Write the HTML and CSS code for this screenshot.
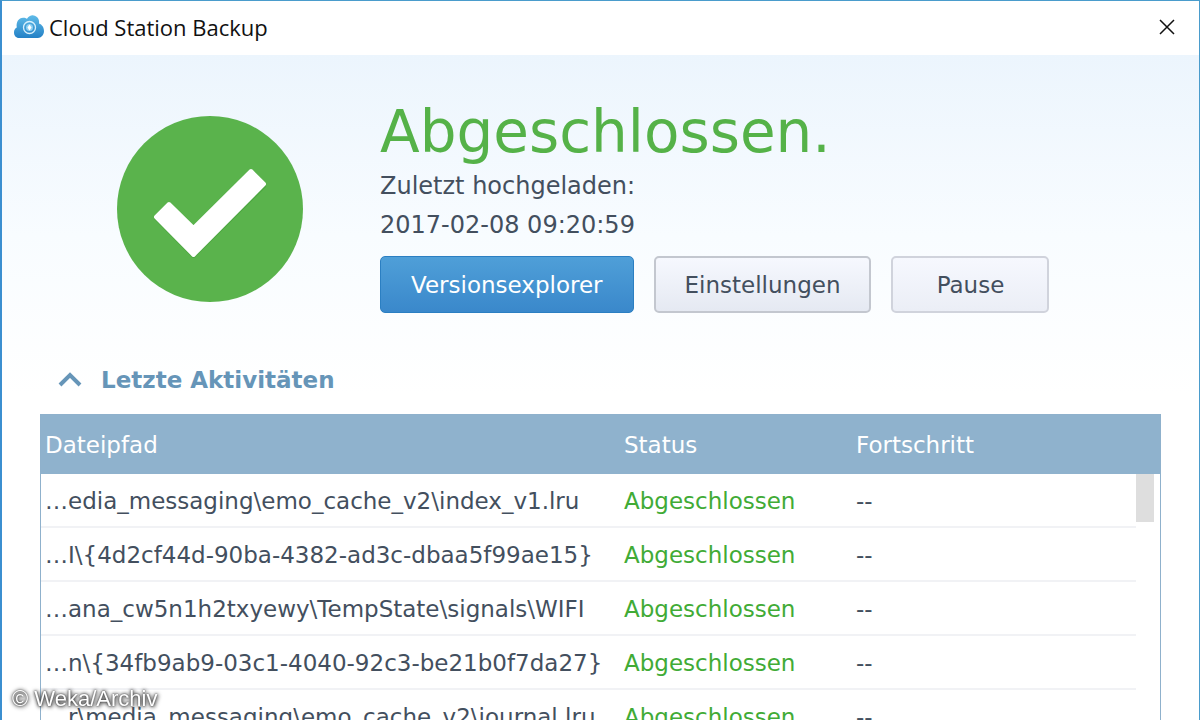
FILE: index.html
```html
<!DOCTYPE html>
<html lang="de">
<head>
    <meta charset="UTF-8">
    <meta name="viewport" content="width=device-width, initial-scale=1.0">
    <title>Cloud Station Backup</title>
    <link rel="stylesheet" href="styles.css">
</head>
<body>
    <div class="window">
        <header class="titlebar">
            <svg class="app-icon" viewBox="0 0 30 24" aria-hidden="true">
                <defs>
                    <linearGradient id="cloud" x1="0" y1="0" x2="0" y2="1">
                        <stop offset="0" stop-color="#5fbbe8"/>
                        <stop offset="1" stop-color="#2481c6"/>
                    </linearGradient>
                </defs>
                <path fill="url(#cloud)" d="M5 23C2 23 0 20.500 0 17.500C0 15 1 13.500 2.800 12.500C1.800 7 5 2.500 9.500 2.800C11 2.800 12 3.300 13 3.800C14.500 1.400 17 0 19.500 .4C23.500 1 25.800 4.600 25 8.500C28 9.500 30 12.500 30 16C30 20 27 23 24 23Z"/>
                <circle cx="15.500" cy="12.500" r="6" fill="none" stroke="#d9f0fc" stroke-width="1.300"/>
                <circle cx="15.500" cy="12.500" r="3.500" fill="#8fd0f2"/>
                <path fill="#ffffff" d="M15.500 9.500l2 3l-2 3l-2-3z"/>
            </svg>
            <h1 class="app-name">Cloud Station Backup</h1>
            <button type="button" class="close" aria-label="Schließen">
                <svg viewBox="0 0 16 16" aria-hidden="true">
                    <path d="M1 1L15 15M15 1L1 15" stroke="#111111" stroke-width="1.500" fill="none"/>
                </svg>
            </button>
        </header>

        <main class="content">
            <section class="summary">
                <svg class="check" viewBox="0 0 186 186" aria-hidden="true">
                    <circle cx="93" cy="93" r="93" fill="#5ab34c"/>
                    <path d="M39 102L52 90L76.500 113L134 57L147 70L76.500 140Z" fill="#3f9a35" stroke="#3f9a35" stroke-width="4" stroke-linejoin="round" opacity=".5"/>
                    <path d="M39 101L52 88L76.500 112L134 55L147 68L76.500 139Z" fill="#ffffff" stroke="#ffffff" stroke-width="4" stroke-linejoin="round"/>
                </svg>
                <div class="details">
                    <h2 class="state">Abgeschlossen.</h2>
                    <p class="uploaded">Zuletzt hochgeladen:<br>2017-02-08 09:20:59</p>
                    <div class="actions">
                        <button type="button" class="btn btn-primary">Versionsexplorer</button>
                        <button type="button" class="btn">Einstellungen</button>
                        <button type="button" class="btn btn-light">Pause</button>
                    </div>
                </div>
            </section>

            <button type="button" class="toggle" aria-expanded="true">
                <svg viewBox="0 0 24 16" aria-hidden="true">
                    <path d="M2 13L12 3L22 13" fill="none" stroke="#6695b8" stroke-width="4"/>
                </svg>
                Letzte Aktivitäten
            </button>

            <div class="activity">
                <table>
                    <colgroup>
                        <col class="col-path">
                        <col class="col-status">
                        <col>
                        <col class="col-scroll">
                    </colgroup>
                    <thead>
                        <tr><th>Dateipfad</th><th>Status</th><th>Fortschritt</th><th></th></tr>
                    </thead>
                    <tbody>
                        <tr><td>…edia_messaging\emo_cache_v2\index_v1.lru</td><td class="done">Abgeschlossen</td><td>--</td></tr>
                        <tr><td>…I\{4d2cf44d-90ba-4382-ad3c-dbaa5f99ae15}</td><td class="done">Abgeschlossen</td><td>--</td></tr>
                        <tr><td>…ana_cw5n1h2txyewy\TempState\signals\WIFI</td><td class="done">Abgeschlossen</td><td>--</td></tr>
                        <tr><td>…n\{34fb9ab9-03c1-4040-92c3-be21b0f7da27}</td><td class="done">Abgeschlossen</td><td>--</td></tr>
                        <tr><td>…r\media_messaging\emo_cache_v2\journal.lru</td><td class="done">Abgeschlossen</td><td>--</td></tr>
                    </tbody>
                </table>
                <div class="thumb"></div>
            </div>
        </main>
    </div>
    <div class="credit">© Weka/Archiv</div>
</body>
</html>
```
FILE: styles.css
```css
* {
    box-sizing: border-box;
}
body {
    margin: 0;
    font-family: Verdana, "DejaVu Sans", sans-serif;
    font-size: 23px;
    color: #434f5e;
}
h1, h2, p {
    margin: 0;
    font-weight: normal;
}
button {
    font: inherit;
    color: inherit;
    cursor: pointer;
}
.window {
    display: flex;
    flex-direction: column;
    height: 100vh;
    overflow: hidden;
    border: 1px solid #4a9ccc;
    border-left: 2px solid #3b8fd0;
    border-bottom: none;
    background: #fff;
}
.titlebar {
    display: flex;
    flex: none;
    align-items: center;
    gap: 5px;
    height: 54px;
    padding: 0 24px 2px 12px;
}
.app-icon {
    width: 30px;
    height: 24px;
}
.app-name {
    flex: 1;
    font-family: "Segoe UI", "Open Sans", sans-serif;
    font-size: 22px;
    line-height: 32px;
    color: #111;
}
.close {
    display: flex;
    padding: 0;
    border: none;
    background: none;
}
.close svg {
    width: 16px;
    height: 16px;
}
.content {
    flex: 1;
    min-height: 0;
    padding: 46px 38px 0 38px;
    background: linear-gradient(#ecf5fd 0, #f8fcff 180px, #fff 340px);
}
.summary {
    display: flex;
    gap: 77px;
    padding-left: 77px;
}
.check {
    flex: none;
    width: 186px;
    height: 186px;
    margin-top: 15px;
}
.state {
    font-size: 58px;
    line-height: 62px;
    color: #55b248;
}
.uploaded {
    margin-top: 4px;
    font-size: 24px;
    line-height: 39px;
}
.actions {
    display: flex;
    gap: 20px;
    margin-top: 11px;
}
.btn {
    min-width: 158px;
    height: 57px;
    padding: 0 29px;
    border: 2px solid #c3c7cf;
    border-radius: 5px;
    background: linear-gradient(#f6f8fe, #e5e9f2);
}
.btn-primary {
    padding: 0 30px;
    border: 1px solid #2b7fc2;
    background: linear-gradient(#4f9fd8, #3a88cb);
    color: #fff;
}
.btn-light {
    border-color: #d0d3dc;
    background: linear-gradient(#f6f8fe, #ebeef6);
}
.toggle {
    display: flex;
    align-items: center;
    gap: 19px;
    margin: 49px 0 16px 18px;
    padding: 0;
    border: none;
    background: none;
    font-weight: bold;
    line-height: 36px;
    color: #6695b8;
}
.toggle svg {
    width: 24px;
    height: 16px;
}
.activity {
    position: relative;
    border: 1px solid #8fb1cc;
    background: #fff;
}
table {
    width: 100%;
    table-layout: fixed;
    border-collapse: separate;
    border-spacing: 0;
}
.col-path {
    width: 579px;
}
.col-status {
    width: 232px;
}
.col-scroll {
    width: 24px;
}
th, td {
    height: 54px;
    padding: 2px 4px 0;
    text-align: left;
    white-space: nowrap;
}
th {
    height: 59px;
    padding-top: 0;
    background: #8fb2cd;
    font-weight: normal;
    color: #fff;
}
td {
    border-bottom: 2px solid #f1f2f5;
}
.done {
    color: #41ab36;
}
.thumb {
    position: absolute;
    top: 59px;
    right: 6px;
    width: 18px;
    height: 48px;
    background: #dedede;
}
.credit {
    position: fixed;
    bottom: 8px;
    left: 12px;
    font-family: "Liberation Sans", Arial, sans-serif;
    font-size: 22px;
    line-height: 26px;
    color: #fff;
    text-shadow: 0 0 2px #333, 0 0 4px #444, 1px 1px 4px #555;
}
```
